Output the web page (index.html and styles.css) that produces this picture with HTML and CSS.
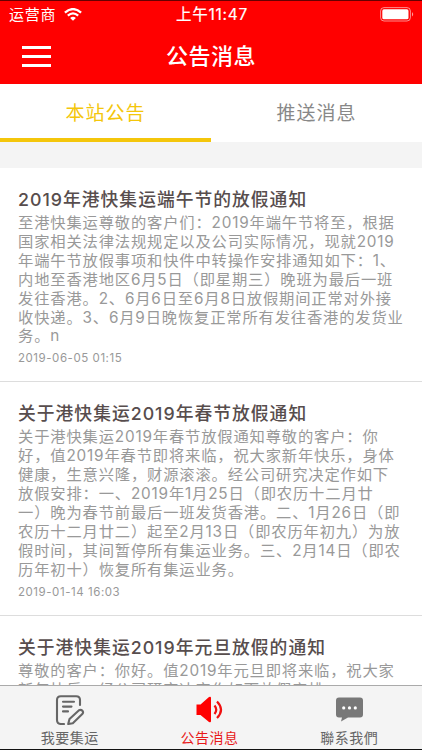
FILE: index.html
```html
<!DOCTYPE html>
<html lang="zh-CN">
<head>
<meta charset="utf-8">
<title>公告消息</title>
<link rel="stylesheet" href="styles.css">
</head>
<body>
<div class="app">
  <header class="header">
    <div class="status">
      <div class="carrier"><span>运营商</span>
        <svg class="wifi" viewBox="0 0 18 13" width="18" height="13"><path d="M.9 4.6Q9-2.4 17.1 4.6M3.8 7.6Q9 3.2 14.2 7.6" fill="none" stroke="#fff" stroke-width="2.3"/><path d="M6.1 9.9Q9 7.6 11.9 9.9L9 12.7Z" fill="#fff"/></svg>
      </div>
      <div class="clock">上午11:47</div>
      <svg class="battery" viewBox="0 0 35 15" width="35" height="15"><rect x=".6" y=".6" width="29.8" height="13.4" rx="3.4" fill="none" stroke="#fff" stroke-opacity=".55"/><rect x="2.3" y="2.3" width="26.2" height="10" rx="1.6" fill="#fff"/><path d="M32 5Q34.4 7.3 32 9.6Z" fill="#fff" fill-opacity=".6"/></svg>
    </div>
    <div class="nav">
      <div class="menu"><i></i><i></i><i></i></div>
      <h1>公告消息</h1>
      <div></div>
    </div>
  </header>
  <nav class="tabs">
    <a class="tab active">本站公告</a>
    <a class="tab">推送消息</a>
  </nav>
  <main class="list">
    <article class="notice">
      <h2>2019年港快集运端午节的放假通知</h2>
      <p>至港快集运尊敬的客户们：2019年端午节将至，根据<br>国家相关法律法规规定以及公司实际情况，现就2019<br>年端午节放假事项和快件中转操作安排通知如下：1、<br>内地至香港地区6月5日（即星期三）晚班为最后一班<br>发往香港。2、6月6日至6月8日放假期间正常对外接<br>收快递。3、6月9日晚恢复正常所有发往香港的发货业<br>务。n</p>
      <time>2019-06-05 01:15</time>
    </article>
    <article class="notice">
      <h2>关于港快集运2019年春节放假通知</h2>
      <p>关于港快集运2019年春节放假通知尊敬的客户：你<br>好，值2019年春节即将来临，祝大家新年快乐，身体<br>健康，生意兴隆，财源滚滚。经公司研究决定作如下<br>放假安排：一、2019年1月25日（即农历十二月廿<br>一）晚为春节前最后一班发货香港。二、1月26日（即<br>农历十二月廿二）起至2月13日（即农历年初九）为放<br>假时间，其间暂停所有集运业务。三、2月14日（即农<br>历年初十）恢复所有集运业务。</p>
      <time>2019-01-14 16:03</time>
    </article>
    <article class="notice">
      <h2>关于港快集运2019年元旦放假的通知</h2>
      <p>尊敬的客户：你好。值2019年元旦即将来临，祝大家<br>新年快乐，经公司研究决定作如下放假安排</p>
    </article>
  </main>
  <footer class="tabbar">
    <a class="item">
      <svg viewBox="0 0 30 30" width="30" height="30" fill="none" stroke="#666" stroke-width="2.1" stroke-linecap="round" stroke-linejoin="round"><path d="M9 29H6Q2 29 2 25V5Q2 1.2 5.8 1.2H21.2Q25 1.2 25 5V10M8 6.8H19M8 11.6H16.5M8 16.4H13"/><path d="M14.5 24L24 15.2Q26 14.2 27.4 15.8Q28.8 17.4 27.3 19.1L17.8 28.2L13.2 29Z"/></svg>
      <span>我要集运</span>
    </a>
    <a class="item current">
      <svg viewBox="0 0 30 30" width="30" height="30"><path d="M1.5 9.5H5.5L14 2Q16 1 16 3V26Q16 28 14 27L5.5 20H1.5Z" fill="red"/><path d="M19.5 10.5Q23 14.7 19.5 19M22 6.5Q30 14.7 22 23" fill="none" stroke="#f01010" stroke-width="2.2"/></svg>
      <span>公告消息</span>
    </a>
    <a class="item">
      <svg viewBox="0 0 30 30" width="30" height="30"><path d="M5 2.5H26Q29 2.5 29 5.5V19.5Q29 22.5 26 22.5H14L7 26.5L8 22.5H5Q2 22.5 2 19.5V5.5Q2 2.5 5 2.5Z" fill="#787878"/><g fill="#fff"><circle cx="9.7" cy="12.9" r="1.6"/><circle cx="15.5" cy="12.9" r="1.6"/><circle cx="21.3" cy="12.9" r="1.6"/></g></svg>
      <span>聯系我們</span>
    </a>
  </footer>
</div>
</body>
</html>
```
FILE: styles.css
```css
* { box-sizing: border-box; }
body { margin: 0; font-family: Inter, "Noto Sans CJK SC", sans-serif; background: #fff; }
.app { width: 422px; height: 750px; display: flex; flex-direction: column; overflow: hidden; border-bottom: 1px solid #111; }
.header { flex: none; height: 84px; background: red; color: #fff; border-top: 1px solid #600; }
.status { height: 27px; display: grid; grid-template-columns: 1fr auto 1fr; align-items: center; padding: 0 7px 0 9px; }
.carrier { display: flex; align-items: center; gap: 8px; font-size: 15px; line-height: 20px; letter-spacing: .7px; }
.clock { font-size: 15.5px; line-height: 20px; padding-top: 1px; letter-spacing: .7px; -webkit-text-stroke: .2px #fff; }
.battery { justify-self: end; }
.nav { height: 56px; display: grid; grid-template-columns: 1fr auto 1fr; align-items: center; padding: 0 22px; }
.menu { display: flex; flex-direction: column; gap: 6px; width: 29px; }
.menu i { height: 3px; background: #fff; }
h1 { margin: 0; font-size: 22px; line-height: 30px; font-weight: 500; letter-spacing: .5px; }
.tabs { flex: none; height: 58px; display: flex; }
.tab { flex: 1; text-align: center; font-size: 19px; line-height: 60px; letter-spacing: 1px; color: #888; }
.tab.active { color: #f4c60b; border-bottom: 4px solid #f4c60b; }
.list { flex: 1; min-height: 0; overflow: hidden; border-top: 26px solid #f4f4f4; }
.notice { padding: 20px 18px 14px; border-bottom: 1px solid #ddd; }
h2 { margin: 0; font-size: 17.8px; line-height: 24px; font-weight: 500; letter-spacing: 1px; color: #574d4d; white-space: nowrap; }
p { margin: 0; padding-top: 2px; font-size: 15.3px; line-height: 18.9px; letter-spacing: .83px; color: #999; white-space: nowrap; }
time { display: block; margin-top: 4px; font-size: 11.5px; line-height: 17px; letter-spacing: .55px; color: #999; }
.tabbar { flex: none; height: 64px; display: flex; padding-right: 3px; background: #f4f4f4; border-top: 1px solid #aaa; }
.item { flex: 1; display: flex; flex-direction: column; align-items: center; padding-top: 9px; color: #666; }
.item span { font-size: 14px; line-height: 20px; letter-spacing: .5px; margin-top: 3px; }
.item.current { color: #e81919; }
```
